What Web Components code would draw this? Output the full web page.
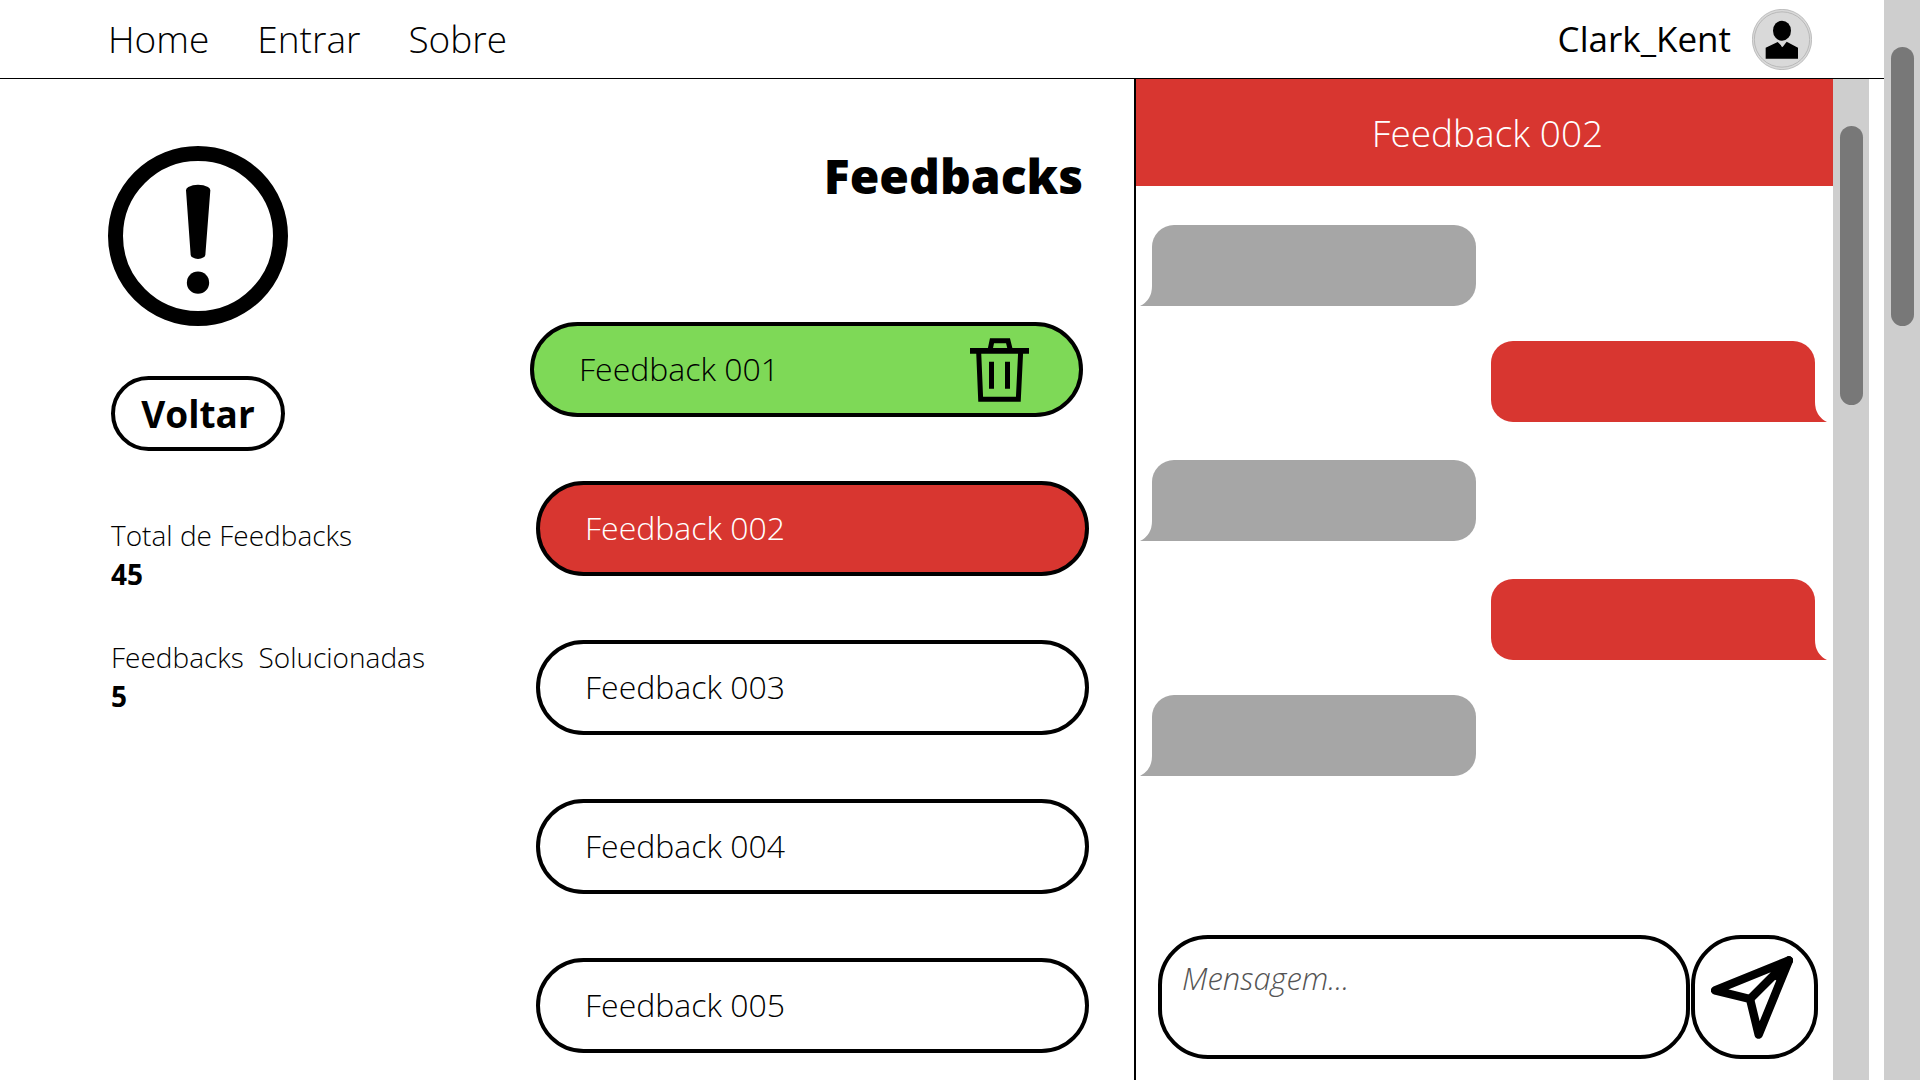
<!DOCTYPE html>
<html lang="pt-BR">
<head>
<meta charset="utf-8">
<meta name="viewport" content="width=device-width, initial-scale=1">
<title>Feedbacks</title>
<style>
  :root {
    --ink: #000;
    --red: #d83630;
    --green: #7ed957;
    --bubble: #a6a6a6;
    --track: #cecece;
    --thumb: #787878;
  }
  body {
    margin: 0;
    background: #fff;
    color: var(--ink);
    font-family: "Open Sans", "Noto Sans", sans-serif;
    font-weight: 300;
  }
</style>
</head>
<body>
<feedback-page></feedback-page>

<script>
const define = (name, html) => {
  const template = document.createElement('template');
  template.innerHTML = `<style>*{box-sizing:border-box}button{font:inherit;color:inherit;background:none;border:0;padding:0;margin:0;cursor:pointer}</style>${html}`;
  customElements.define(name, class extends HTMLElement {
    constructor() {
      super();
      this.attachShadow({ mode: 'open' }).append(template.content.cloneNode(true));
    }
  });
};

define('scroll-track', `
  <style>
    :host { display: block; flex: none; width: 36px; padding: 47px 6px 0 7px; background: var(--track); }
    div { height: 279px; border-radius: 12px; background: var(--thumb); }
  </style>
  <div></div>`);

define('nav-link', `
  <style>
    :host { display: block; }
    a { color: inherit; text-decoration: none; font-size: 37px; line-height: 50px; }
  </style>
  <a href="#"><slot></slot></a>`);

define('user-badge', `
  <style>
    :host { display: flex; align-items: center; gap: 21px; font-size: 35px; line-height: 48px; font-weight: 400; }
    svg { display: block; width: 60px; height: 61px; }
  </style>
  <slot></slot>
  <svg viewBox="0 0 180 183" aria-hidden="true">
    <ellipse cx="90" cy="91.500" rx="89" ry="90.500" fill="#d9d9d9" stroke="#a8a8a8" stroke-width="2"/>
    <ellipse cx="90" cy="91.500" rx="83" ry="83" fill="none" stroke="#a8a8a8" stroke-width="2"/>
    <ellipse cx="90" cy="65" rx="27" ry="30"/>
    <path d="M41 149V116L77 99L92 114L104 98L138 116V149Z"/>
    <path d="M82 96L90 115L100 96Z" fill="#d9d9d9"/>
  </svg>`);

define('site-header', `
  <style>
    :host { display: flex; align-items: center; justify-content: space-between; height: 79px; padding: 0 72px 0 108px; border-bottom: 1px solid var(--ink); }
    nav { display: flex; gap: 48px; }
  </style>
  <nav><nav-link>Home</nav-link><nav-link>Entrar</nav-link><nav-link>Sobre</nav-link></nav>
  <user-badge>Clark_Kent</user-badge>`);

define('back-button', `
  <style>
    :host { display: block; }
    button { display: block; width: 174px; height: 75px; border: 4px solid var(--ink); border-radius: 38px; font-size: 37px; line-height: 50px; font-weight: 700; }
  </style>
  <button type="button"><slot></slot></button>`);

define('stat-item', `
  <style>
    :host { display: block; font-size: 28px; line-height: 39px; }
    span { display: block; white-space: pre; }
    b { display: block; font-weight: 700; }
  </style>
  <span><slot></slot></span>
  <b><slot name="value"></slot></b>`);

define('side-summary', `
  <style>
    :host { display: block; padding-top: 67px; }
    .top { display: flex; flex-direction: column; align-items: center; gap: 50px; width: 180px; }
    svg { display: block; width: 180px; height: 180px; }
    .stats { display: flex; flex-direction: column; gap: 44px; padding: 65px 0 0 3px; }
  </style>
  <div class="top">
    <svg viewBox="0 0 540 540" aria-hidden="true">
      <circle cx="270" cy="270" r="247.500" fill="none" stroke="#000" stroke-width="45"/>
      <path d="M234 133Q234 127 241 123Q254 116 270 116Q287 116 300 123Q307 127 307 133L292 327Q291 332 287 334Q279 339 270 339Q261 339 253 334Q249 332 248 327Z"/>
      <circle cx="270" cy="410" r="33.500"/>
    </svg>
    <back-button>Voltar</back-button>
  </div>
  <div class="stats">
    <stat-item>Total de Feedbacks<span slot="value">45</span></stat-item>
    <stat-item>Feedbacks  Solucionadas<span slot="value">5</span></stat-item>
  </div>`);

define('feedback-pill', `
  <style>
    :host { display: flex; align-items: center; height: 95px; padding-right: 50px; border: 4px solid var(--ink); border-radius: 48px; font-size: 32px; line-height: 44px; }
    :host([state="solved"]) { background: var(--green); }
    :host([state="open"]) { background: var(--red); color: #fff; }
    .pick { flex: 1; align-self: stretch; padding: 0 0 2px 45px; text-align: left; }
  </style>
  <button type="button" class="pick"><slot></slot></button>
  <slot name="action"></slot>`);

define('delete-button', `
  <style>
    :host, button { display: block; }
    svg { display: block; width: 59px; height: 64px; }
  </style>
  <button type="button" aria-label="Excluir">
    <svg viewBox="0 0 177 191" fill="none" stroke="#000" stroke-width="15">
      <path d="M0 38H177" stroke-width="17"/>
      <path d="M60 36L66 7.500H114L121 36"/>
      <path d="M26 40L32 183.500H145L152 40"/>
      <path d="M64.500 71V152M112.500 71V152"/>
    </svg>
  </button>`);

define('feedback-list', `
  <style>
    :host { display: flex; flex-direction: column; gap: 64px; padding: 64px 0 27px; }
    .lead { padding-right: 6px; }
    h1 { margin: 0 0 114px; text-align: right; font-size: 48px; line-height: 65px; font-weight: 800; }
    .lead feedback-pill { margin-left: -6px; }
  </style>
  <div class="lead">
    <h1>Feedbacks</h1>
    <feedback-pill state="solved">Feedback 001<delete-button slot="action"></delete-button></feedback-pill>
  </div>
  <feedback-pill state="open">Feedback 002</feedback-pill>
  <feedback-pill>Feedback 003</feedback-pill>
  <feedback-pill>Feedback 004</feedback-pill>
  <feedback-pill>Feedback 005</feedback-pill>`);

define('chat-bubble', `
  <style>
    :host { display: flex; align-items: flex-end; height: 81px; color: var(--bubble); }
    :host([mine]) { flex-direction: row-reverse; color: var(--red); }
    .body { width: 324px; height: 81px; background: currentColor; border-radius: 22px 22px 22px 0; }
    :host([mine]) .body { border-radius: 22px 22px 0 22px; }
    svg { display: block; width: 12px; height: 20px; }
    :host([mine]) svg { transform: scaleX(-1); }
  </style>
  <svg viewBox="0 0 12 20" aria-hidden="true"><path d="M12 0Q12 14 0 20H12Z" fill="currentColor"/></svg>
  <div class="body"></div>`);

define('chat-group', `
  <style>:host { display: flex; flex-direction: column; gap: 35px; }</style>
  <slot></slot>`);

define('message-composer', `
  <style>
    :host { display: flex; gap: 1px; padding: 0 15px 21px 22px; }
    textarea, button { height: 124px; border: 4px solid var(--ink); border-radius: 50px; }
    textarea { flex: 1; min-width: 0; margin: 0; padding: 17px 20px; resize: none; overflow: hidden; outline: 0; background: #fff; color: var(--ink); font: italic 300 31px/44px "Open Sans", "Noto Sans", sans-serif; }
    textarea::placeholder { color: #545454; opacity: 1; }
    button { display: flex; align-items: center; justify-content: center; width: 127px; padding-right: 6px; }
    svg { display: block; width: 82px; height: 83px; }
  </style>
  <textarea aria-label="Mensagem" placeholder="Mensagem..."></textarea>
  <button type="button" aria-label="Enviar">
    <svg viewBox="0 0 246 249" fill="none" stroke="#000" stroke-width="25" stroke-linejoin="round" stroke-linecap="round">
      <path d="M234 13L12 103L117 129L143 236Z"/>
      <path d="M117 129L228 18"/>
      <path d="M234 13L190 55L200 62Z"/>
    </svg>
  </button>`);

define('chat-panel', `
  <style>
    :host { display: flex; border-left: 2px solid var(--ink); }
    section { flex: 1; display: flex; flex-direction: column; min-width: 0; }
    h2 { margin: 0; padding: 29px 0 28px 6px; background: var(--red); color: #fff; text-align: center; font-size: 37px; line-height: 50px; font-weight: 300; }
    .thread { flex: 1; display: flex; flex-direction: column; gap: 38px; padding: 39px 6px 39px 4px; }
  </style>
  <section>
    <h2>Feedback 002</h2>
    <div class="thread">
      <chat-group><chat-bubble></chat-bubble><chat-bubble mine></chat-bubble></chat-group>
      <chat-group><chat-bubble></chat-bubble></chat-group>
      <chat-group><chat-bubble mine></chat-bubble><chat-bubble></chat-bubble></chat-group>
    </div>
    <message-composer></message-composer>
  </section>
  <scroll-track></scroll-track>`);

define('feedback-page', `
  <style>
    :host { display: flex; min-height: 100vh; }
    .page { flex: 1; display: flex; flex-direction: column; min-width: 0; }
    .content { flex: 1; display: grid; grid-template-columns: 1134fr 735fr; padding-right: 15px; }
    main { display: grid; grid-template-columns: 428fr 553fr; padding: 0 45px 0 108px; }
  </style>
  <div class="page">
    <site-header></site-header>
    <div class="content">
      <main><side-summary></side-summary><feedback-list></feedback-list></main>
      <chat-panel></chat-panel>
    </div>
  </div>
  <scroll-track></scroll-track>`);
</script>
</body>
</html>
